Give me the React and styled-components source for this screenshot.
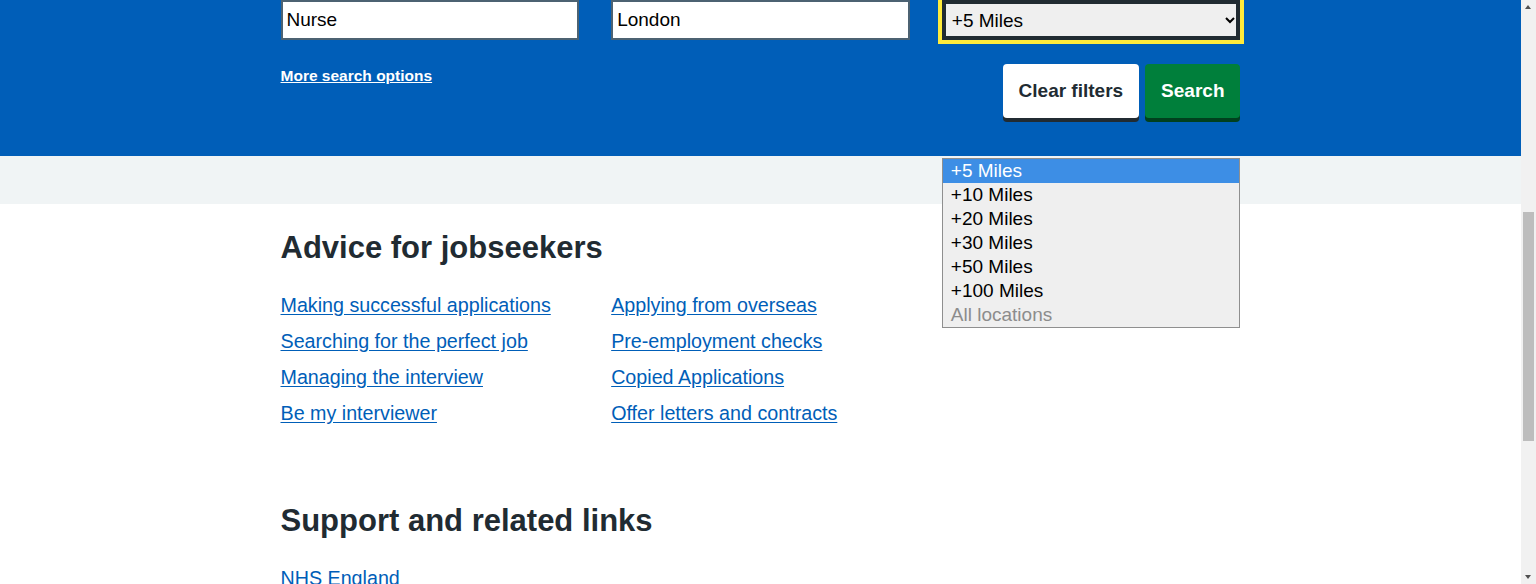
import React from "react";
import styled, { createGlobalStyle } from "styled-components";

const GlobalStyle = createGlobalStyle`
  body {
    margin: 0 15px 0 0;
    font-family: "Liberation Sans", Arial, sans-serif;
    color: #212b32;
    background: #ffffff;
    overflow: hidden;
  }
  * {
    box-sizing: border-box;
  }
`;

const Container = styled.div`
  width: 960px;
  margin: 0 auto;
`;

const Hero = styled.section`
  background: #005eb8;
  color: #ffffff;
  padding: 0 0 38px;
`;

const Grid = styled.div`
  display: grid;
  grid-template-columns: repeat(3, 1fr);
  column-gap: 32px;
`;

const Field = styled.div`
  position: relative;
  display: flex;
  flex-direction: column;
`;

const TextInput = styled.input`
  height: 40px;
  width: 100%;
  border: 2px solid #4c6272;
  border-radius: 0;
  padding: 4px;
  font-family: inherit;
  font-size: 19px;
  color: #000000;
  background: #ffffff;
`;

const Select = styled.select`
  height: 40px;
  width: 100%;
  border: 2px solid #212b32;
  border-radius: 0;
  padding: 0 4px 0 4px;
  font-family: inherit;
  font-size: 19px;
  color: #000000;
  background-color: #efefef;
  outline: 4px solid #ffeb3b;
  box-shadow: inset 0 0 0 2px #212b32;
`;

const OptionList = styled.ul`
  position: absolute;
  top: 158px;
  left: 0;
  width: 100%;
  margin: 0;
  padding: 0;
  list-style: none;
  background: #efefef;
  border: 1px solid #8f8f8f;
  z-index: 10;
`;

const OptionItem = styled.li`
  height: 24px;
  line-height: 24px;
  padding-left: 8px;
  font-size: 19px;
  color: ${(p) => (p.$disabled ? "#8c8c8c" : p.$active ? "#ffffff" : "#000000")};
  background: ${(p) => (p.$active ? "#3d8ee5" : "transparent")};
`;

const ActionsRow = styled(Grid)`
  margin-top: 24px;
  align-items: start;
`;

const MoreLink = styled.a`
  color: #ffffff;
  font-size: 15.5px;
  font-weight: 700;
  line-height: 24px;
  text-decoration: underline;
  cursor: pointer;
`;

const Buttons = styled.div`
  grid-column: 3;
  display: flex;
  justify-content: flex-end;
  gap: 6px;
`;

const Button = styled.button`
  border: 2px solid transparent;
  border-radius: 4px;
  padding: 11px 14px;
  font-family: inherit;
  font-size: 19px;
  font-weight: 700;
  line-height: 28px;
  cursor: pointer;
  color: ${(p) => (p.$secondary ? "#212b32" : "#ffffff")};
  background: ${(p) => (p.$secondary ? "#ffffff" : "#007f3b")};
  box-shadow: 0 4px 0 ${(p) => (p.$secondary ? "#212b32" : "#00401e")};
`;

const Breadcrumb = styled.div`
  background: #f0f4f5;
  height: 48px;
`;

const Main = styled.main`
  padding: 24px 0 0;
`;

const Section = styled.section`
  margin-bottom: 74px;
`;

const Heading = styled.h2`
  font-size: 31px;
  line-height: 40px;
  font-weight: 700;
  margin: 0 0 23px;
`;

const LinkColumn = styled.div`
  display: flex;
  flex-direction: column;
  align-items: flex-start;
  gap: 8px;
`;

const LinkItem = styled.a`
  color: #005eb8;
  font-size: 19.7px;
  line-height: 28px;
  text-decoration: underline;
  text-underline-offset: 2px;
  cursor: pointer;
`;

const Scrollbar = styled.div`
  position: fixed;
  top: 0;
  right: 0;
  width: 15px;
  height: 100vh;
  background: #f1f1f1;
`;

const Arrow = styled.span`
  position: absolute;
  left: 4px;
  width: 0;
  height: 0;
  border-left: 3.5px solid transparent;
  border-right: 3.5px solid transparent;
  ${(p) =>
    p.$down
      ? "bottom: 5px; border-top: 4px solid #505050;"
      : "top: 5px; border-bottom: 4px solid #505050;"}
`;

const Thumb = styled.div`
  position: absolute;
  top: 212px;
  left: 2px;
  width: 11px;
  height: 229px;
  background: #bdbdbd;
`;

const adviceColumns = [
  [
    "Making successful applications",
    "Searching for the perfect job",
    "Managing the interview",
    "Be my interviewer",
  ],
  [
    "Applying from overseas",
    "Pre-employment checks",
    "Copied Applications",
    "Offer letters and contracts",
  ],
];

const distances = [
  "+5 Miles",
  "+10 Miles",
  "+20 Miles",
  "+30 Miles",
  "+50 Miles",
  "+100 Miles",
  "All locations",
];

const relatedLinks = ["NHS England", "NHS Scotland", "NHS Wales"];

const App = () => {
  return (
    <>
      <GlobalStyle />
      <Hero>
        <Container>
          <Grid>
            <Field>
              <TextInput aria-label="What" defaultValue="Nurse" />
            </Field>
            <Field>
              <TextInput aria-label="Where" defaultValue="London" />
            </Field>
            <Field>
              <Select aria-label="Distance" defaultValue="+5 Miles">
                {distances.map((d) => (
                  <option key={d}>{d}</option>
                ))}
              </Select>
              <OptionList>
                {distances.map((d, i) => (
                  <OptionItem key={d} $active={i === 0} $disabled={i === distances.length - 1}>
                    {d}
                  </OptionItem>
                ))}
              </OptionList>
            </Field>
          </Grid>
          <ActionsRow>
            <div>
              <MoreLink>More search options</MoreLink>
            </div>
            <Buttons>
              <Button $secondary>Clear filters</Button>
              <Button>Search</Button>
            </Buttons>
          </ActionsRow>
        </Container>
      </Hero>
      <Breadcrumb />
      <Main>
        <Container>
          <Section>
            <Heading>Advice for jobseekers</Heading>
            <Grid>
              {adviceColumns.map((col, i) => (
                <LinkColumn key={i}>
                  {col.map((l) => (
                    <LinkItem key={l}>{l}</LinkItem>
                  ))}
                </LinkColumn>
              ))}
            </Grid>
          </Section>
          <Section>
            <Heading>Support and related links</Heading>
            <LinkColumn>
              {relatedLinks.map((l) => (
                <LinkItem key={l}>{l}</LinkItem>
              ))}
            </LinkColumn>
          </Section>
        </Container>
      </Main>
      <Scrollbar>
        <Arrow />
        <Thumb />
        <Arrow $down />
      </Scrollbar>
    </>
  );
};

export default App;
